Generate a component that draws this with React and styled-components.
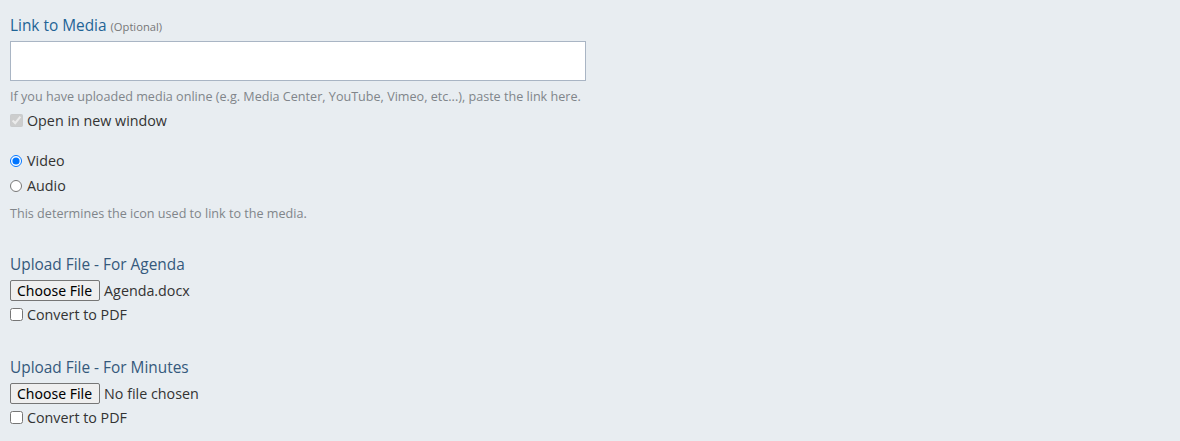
import React from "react";
import styled, { createGlobalStyle } from "styled-components";

const Global = createGlobalStyle`
  html, body { margin: 0; padding: 0; background: #e8edf1; }
  body { font-family: "Open Sans", "Noto Sans", sans-serif; }
`;

const Page = styled.div`
  padding: 14px 10px 0 10px;
  width: 576px;
  display: flex;
  flex-direction: column;
`;

const Label = styled.div`
  font-size: 15.4px;
  color: ${(p) => p.$color || "#1f6496"};
  line-height: 23px;
  height: 22px;
  margin-top: ${(p) => p.$mt || 0}px;
  white-space: nowrap;
`;

const Optional = styled.span`
  font-size: 11.2px;
  color: #777;
`;

const TextInput = styled.input`
  box-sizing: border-box;
  display: block;
  width: 576px;
  height: 40px;
  margin-top: 5px;
  border: 1px solid #a9b5c4;
  background: #fff;
  outline: none;
`;

const Help = styled.div`
  font-size: 12.6px;
  color: #80858a;
  line-height: 16px;
  height: 16px;
  margin-top: ${(p) => p.$mt || 0}px;
  white-space: nowrap;
`;

const Row = styled.label`
  display: flex;
  align-items: center;
  font-size: 14.3px;
  color: #333;
  height: 25px;
  margin-top: ${(p) => p.$mt || 0}px;
`;

const Check = styled.input`
  margin: 0 4px 0 0;
  width: 13px;
  height: 13px;
`;

const Radio = styled.input`
  margin: 0 5px 0 0;
  width: 12px;
  height: 12px;
`;

const FileRow = styled.div`
  display: flex;
  align-items: center;
  height: 24px;
  margin-top: 3px;
  font-size: 14.3px;
  color: #333;
`;

const FileButton = styled.button`
  font-family: "Noto Sans", "Roboto", sans-serif;
  font-size: 14px;
  height: 21px;
  padding: 0 7px 0 6px;
  margin-right: 4px;
  color: #000;
  background: #efefef;
  border: 1px solid #767676;
  border-radius: 2px;
  line-height: 19px;
`;

export default function App() {
  return (
    <>
      <Global />
      <Page>
        <Label>
          Link to Media <Optional>(Optional)</Optional>
        </Label>
        <TextInput type="text" />
        <Help $mt={8}>
          If you have uploaded media online (e.g. Media Center, YouTube, Vimeo, etc...), paste the link here.
        </Help>
        <Row $mt={3}>
          <Check type="checkbox" checked disabled readOnly />
          Open in new window
        </Row>
        <Row $mt={15}>
          <Radio type="radio" name="m" defaultChecked />
          Video
        </Row>
        <Row>
          <Radio type="radio" name="m" />
          Audio
        </Row>
        <Help $mt={8}>This determines the icon used to link to the media.</Help>
        <Label $mt={31} $color="#35597c">Upload File - For Agenda</Label>
        <FileRow>
          <FileButton>Choose File</FileButton>
          Agenda.docx
        </FileRow>
        <Row>
          <Check type="checkbox" />
          Convert to PDF
        </Row>
        <Label $mt={29} $color="#35597c">Upload File - For Minutes</Label>
        <FileRow>
          <FileButton>Choose File</FileButton>
          No file chosen
        </FileRow>
        <Row>
          <Check type="checkbox" />
          Convert to PDF
        </Row>
      </Page>
    </>
  );
}
